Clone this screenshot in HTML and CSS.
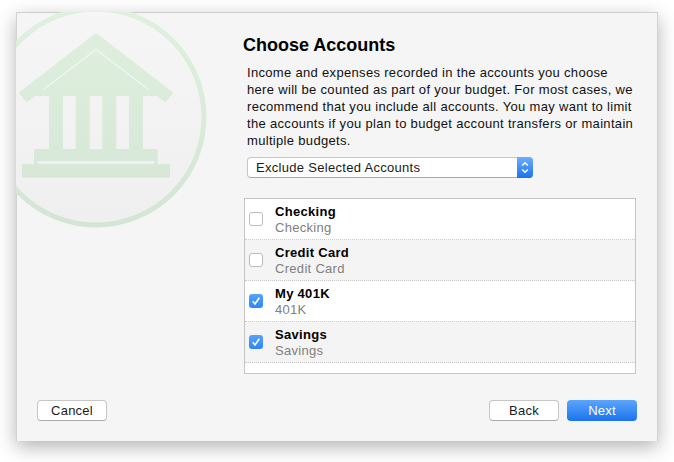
FILE: index.html
```html
<!DOCTYPE html>
<html lang="en">
<head>
<meta charset="utf-8">
<title>Choose Accounts</title>
<link rel="stylesheet" href="styles.css">
</head>
<body>
<div class="window">
  <svg class="watermark" viewBox="16 12 210 225" width="210" height="225" aria-hidden="true">
    <defs>
      <linearGradient id="disc" x1="0" y1="0" x2="0" y2="1">
        <stop offset="0" stop-color="#f6f6f6"/>
        <stop offset="1" stop-color="#efefef"/>
      </linearGradient>
      <linearGradient id="green" gradientUnits="userSpaceOnUse" x1="0" y1="10" x2="0" y2="227">
        <stop offset="0" stop-color="#dff0df"/>
        <stop offset="1" stop-color="#d5e5d5"/>
      </linearGradient>
    </defs>
    <circle cx="96" cy="117" r="108" fill="url(#disc)" stroke="url(#green)" stroke-width="5"/>
    <path fill="url(#green)" stroke="url(#green)" stroke-width="2" stroke-linejoin="round" d="M96 34 L20 93 L27 101 L35 95 H157 L165 101 L172 93 Z"/>
    <path fill="none" stroke="#f3f6f3" stroke-width="1.2" d="M43.5 89.5 L96 49.5 L148.5 89.5"/>
    <g fill="url(#green)">
      <rect x="49" y="95" width="14" height="55"/>
      <rect x="75.7" y="95" width="14" height="55"/>
      <rect x="102.3" y="95" width="14" height="55"/>
      <rect x="129" y="95" width="14" height="55"/>
      <path d="M35.500 149 H156.200 a1.500 1.500 0 0 1 1.500 1.500 V164 H154.300 V161 H37.700 V164 H34 V150.500 a1.500 1.500 0 0 1 1.500 -1.500 Z"/>
      <rect x="22" y="164" width="148" height="13.700" rx="1.500"/>
    </g>
  </svg>
  <div class="body">
    <main class="content">
      <h1 class="title">Choose Accounts</h1>
      <p class="intro">Income and expenses recorded in the accounts you choose<br>here will be counted as part of your budget. For most cases, we<br>recommend that you include all accounts. You may want to limit<br>the accounts if you plan to budget account transfers or maintain<br>multiple budgets.</p>
      <div class="select">
        <span class="select-label">Exclude Selected Accounts</span>
        <span class="select-arrows">
          <svg viewBox="0 0 16 21" width="16" height="21" aria-hidden="true"><path d="M5.200 8.500 L8 5.700 L10.800 8.500 M5.200 12.500 L8 15.300 L10.800 12.500" fill="none" stroke="#fff" stroke-width="1.500"/></svg>
        </span>
      </div>
      <ul class="list">
        <li class="row">
          <span class="check"></span>
          <div class="names"><div class="name">Checking</div><div class="sub">Checking</div></div>
        </li>
        <li class="row alt">
          <span class="check"></span>
          <div class="names"><div class="name">Credit Card</div><div class="sub">Credit Card</div></div>
        </li>
        <li class="row">
          <span class="check on"><svg viewBox="0 0 14 14" width="14" height="14" aria-hidden="true"><path d="M3.700 7.300 L6 10 L10.300 3.700" fill="none" stroke="#fff" stroke-width="1.600"/></svg></span>
          <div class="names"><div class="name">My 401K</div><div class="sub">401K</div></div>
        </li>
        <li class="row alt">
          <span class="check on"><svg viewBox="0 0 14 14" width="14" height="14" aria-hidden="true"><path d="M3.700 7.300 L6 10 L10.300 3.700" fill="none" stroke="#fff" stroke-width="1.600"/></svg></span>
          <div class="names"><div class="name">Savings</div><div class="sub">Savings</div></div>
        </li>
      </ul>
    </main>
  </div>
  <footer class="footer">
    <button class="btn" type="button">Cancel</button>
    <div class="footer-right">
      <button class="btn" type="button">Back</button>
      <button class="btn primary" type="button">Next</button>
    </div>
  </footer>
</div>
</body>
</html>
```
FILE: styles.css
```css
* { box-sizing: border-box; }
html, body { margin: 0; height: 100%; }
body {
  background: #fff;
  padding: 12px 16px 0;
  font-family: "Liberation Sans", Arial, sans-serif;
  font-size: 13px;
  color: #000;
  overflow: hidden;
}
.window {
  position: relative;
  width: 642px;
  height: 429px;
  background: #f5f5f5;
  border-top: 1px solid #cfcfcf;
  border-left: 1px solid #d2d2d2;
  border-right: 1px solid #d2d2d2;
  box-shadow: 0 6px 18px rgba(0,0,0,.3);
  display: flex;
  flex-direction: column;
}
.watermark { position: absolute; left: -1px; top: -1px; }
.body { position: relative; flex: 1; padding-left: 226px; display: flex; }
.content { flex: 1; padding-top: 23px; }
.title { margin: 0; font-size: 18px; line-height: 19px; font-weight: 700; }
.intro { margin: 9px 0 0 4px; line-height: 17px; letter-spacing: .32px; white-space: nowrap; color: #111; }
.select {
  margin: 8px 0 0 4px;
  width: 286px;
  height: 21px;
  display: flex;
  align-items: center;
  background: #fff;
  border: 1px solid #c6c6c6;
  border-bottom-color: #aaa;
  border-radius: 4px;
}
.select-label { flex: 1; padding-left: 8px; letter-spacing: .3px; color: #1a1a1a; }
.select-arrows {
  width: 16px;
  height: 21px;
  margin-right: -1px;
  background: linear-gradient(#6cb0fb, #1b72ec);
  border-radius: 0 4px 4px 0;
  display: flex;
}
.list {
  list-style: none;
  margin: 20px 0 0 1px;
  padding: 0;
  width: 392px;
  height: 176px;
  background: #fff;
  border: 1px solid #c4c4c4;
}
.row {
  height: 41px;
  display: flex;
  align-items: center;
  padding: 0 0 0 4px;
  border-bottom: 1px dotted #c8c8c8;
  background: #fff;
}
.row.alt { background: #f4f4f4; }
.check {
  width: 14px;
  height: 14px;
  border-radius: 3px;
  background: #fff;
  border: 1px solid #bcbcbc;
  flex: none;
}
.check.on {
  border: 0;
  background: linear-gradient(#56a3fa, #2e86f6);
  display: flex;
}
.names { margin-left: 12px; padding-top: 2px; }
.name { font-weight: 700; line-height: 16px; letter-spacing: .3px; }
.sub { color: #808080; line-height: 16px; letter-spacing: .3px; }
.footer {
  display: flex;
  justify-content: space-between;
  padding: 0 20px 20px;
}
.footer-right { display: flex; gap: 8px; }
.btn {
  width: 70px;
  height: 21px;
  padding: 0;
  font: inherit;
  color: #1a1a1a;
  letter-spacing: .25px;
  background: #fff;
  border: 1px solid #c6c6c6;
  border-bottom-color: #aaa;
  border-radius: 4px;
}
.btn.primary {
  color: #fff;
  background: linear-gradient(#5ba6fb, #1b72ef);
  border: 0;
}
```
